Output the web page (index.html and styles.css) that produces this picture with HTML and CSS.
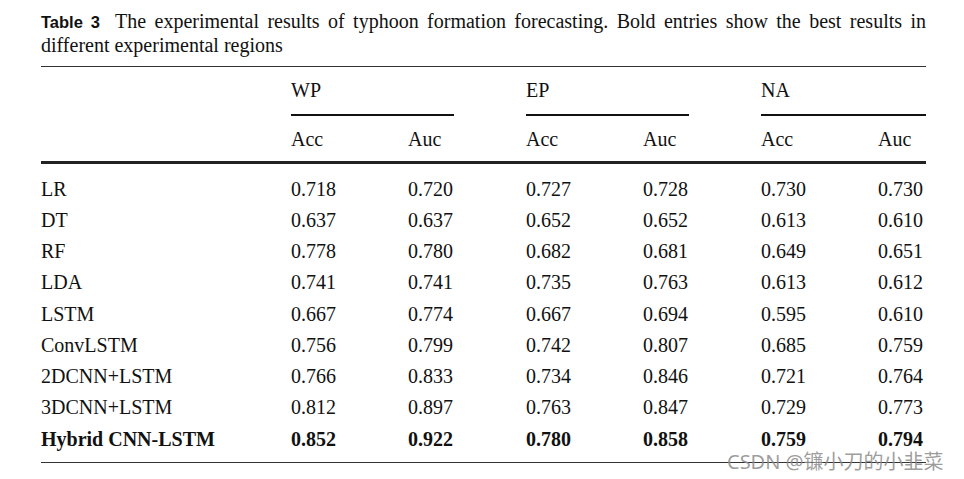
FILE: index.html
```html
<!DOCTYPE html>
<html lang="en">
<head>
<meta charset="utf-8">
<title>Table 3</title>
<link rel="stylesheet" href="styles.css">
</head>
<body>
<div class="page">
  <div class="caption">
    <div class="cap-line first"><span class="cap-label">Table 3</span>The experimental results of typhoon formation forecasting. Bold entries show the best results in</div>
    <div class="cap-line">different experimental regions</div>
  </div>
  <div class="table">
    <div class="head">
      <div class="cell blank"></div>
      <div class="cell group">WP</div>
      <div class="cell group">EP</div>
      <div class="cell group last">NA</div>
    </div>
    <div class="sub">
      <div class="cell"></div>
      <div class="cell">Acc</div><div class="cell">Auc</div>
      <div class="cell">Acc</div><div class="cell">Auc</div>
      <div class="cell">Acc</div><div class="cell">Auc</div>
    </div>
    <div class="body">
      <div class="row"><div class="cell">LR</div><div class="cell">0.718</div><div class="cell">0.720</div><div class="cell">0.727</div><div class="cell">0.728</div><div class="cell">0.730</div><div class="cell">0.730</div></div>
      <div class="row"><div class="cell">DT</div><div class="cell">0.637</div><div class="cell">0.637</div><div class="cell">0.652</div><div class="cell">0.652</div><div class="cell">0.613</div><div class="cell">0.610</div></div>
      <div class="row"><div class="cell">RF</div><div class="cell">0.778</div><div class="cell">0.780</div><div class="cell">0.682</div><div class="cell">0.681</div><div class="cell">0.649</div><div class="cell">0.651</div></div>
      <div class="row"><div class="cell">LDA</div><div class="cell">0.741</div><div class="cell">0.741</div><div class="cell">0.735</div><div class="cell">0.763</div><div class="cell">0.613</div><div class="cell">0.612</div></div>
      <div class="row"><div class="cell">LSTM</div><div class="cell">0.667</div><div class="cell">0.774</div><div class="cell">0.667</div><div class="cell">0.694</div><div class="cell">0.595</div><div class="cell">0.610</div></div>
      <div class="row"><div class="cell">ConvLSTM</div><div class="cell">0.756</div><div class="cell">0.799</div><div class="cell">0.742</div><div class="cell">0.807</div><div class="cell">0.685</div><div class="cell">0.759</div></div>
      <div class="row"><div class="cell">2DCNN+LSTM</div><div class="cell">0.766</div><div class="cell">0.833</div><div class="cell">0.734</div><div class="cell">0.846</div><div class="cell">0.721</div><div class="cell">0.764</div></div>
      <div class="row"><div class="cell">3DCNN+LSTM</div><div class="cell">0.812</div><div class="cell">0.897</div><div class="cell">0.763</div><div class="cell">0.847</div><div class="cell">0.729</div><div class="cell">0.773</div></div>
      <div class="row best"><div class="cell">Hybrid CNN-LSTM</div><div class="cell">0.852</div><div class="cell">0.922</div><div class="cell">0.780</div><div class="cell">0.858</div><div class="cell">0.759</div><div class="cell">0.794</div></div>
    </div>
  </div>
  <div class="watermark">CSDN @镰小刀的小韭菜</div>
</div>
</body>
</html>
```

FILE: styles.css
```css
html, body {
  margin: 0;
  padding: 0;
  background: #ffffff;
}

.page {
  position: relative;
  width: 885px;
  height: 469px;
  padding: 10px 0 0 41px;
  box-sizing: content-box;
  font-family: "Liberation Serif", "Times New Roman", serif;
  font-size: 20px;
  color: #111111;
}

.caption {
  line-height: 23px;
}

.cap-line.first {
  text-align: justify;
  text-align-last: justify;
}

.cap-label {
  font-family: "Liberation Sans", Arial, sans-serif;
  font-weight: bold;
  font-size: 16.5px;
  margin-right: 15px;
}

.table {
  margin-top: 9px;
  border-top: 1px solid #333;
  border-bottom: 1px solid #333;
}

.head,
.sub,
.row {
  display: grid;
  grid-template-columns: 250px 117px 118px 117px 118px 117px 48px;
}

.head {
  padding-top: 12px;
}

.head .group {
  grid-column: span 2;
  line-height: 23px;
  padding-bottom: 12px;
  border-bottom: 2px solid #111;
  margin-right: 72px;
}

.head .group.last {
  margin-right: 0;
}

.sub {
  padding-top: 12px;
  padding-bottom: 10px;
  line-height: 23px;
  border-bottom: 3px solid #222;
}

.body {
  padding: 9.5px 0 7.5px;
}

.row {
  line-height: 31.25px;
  height: 31.25px;
}

.cell {
  white-space: nowrap;
}

.row.best {
  font-weight: bold;
}

.watermark {
  position: absolute;
  left: 727px;
  top: 448px;
  font-family: "Noto Sans", "Noto Sans CJK SC", sans-serif;
  font-size: 20px;
  line-height: 28px;
  color: rgba(140, 140, 140, 0.85);
  white-space: nowrap;
}
```
